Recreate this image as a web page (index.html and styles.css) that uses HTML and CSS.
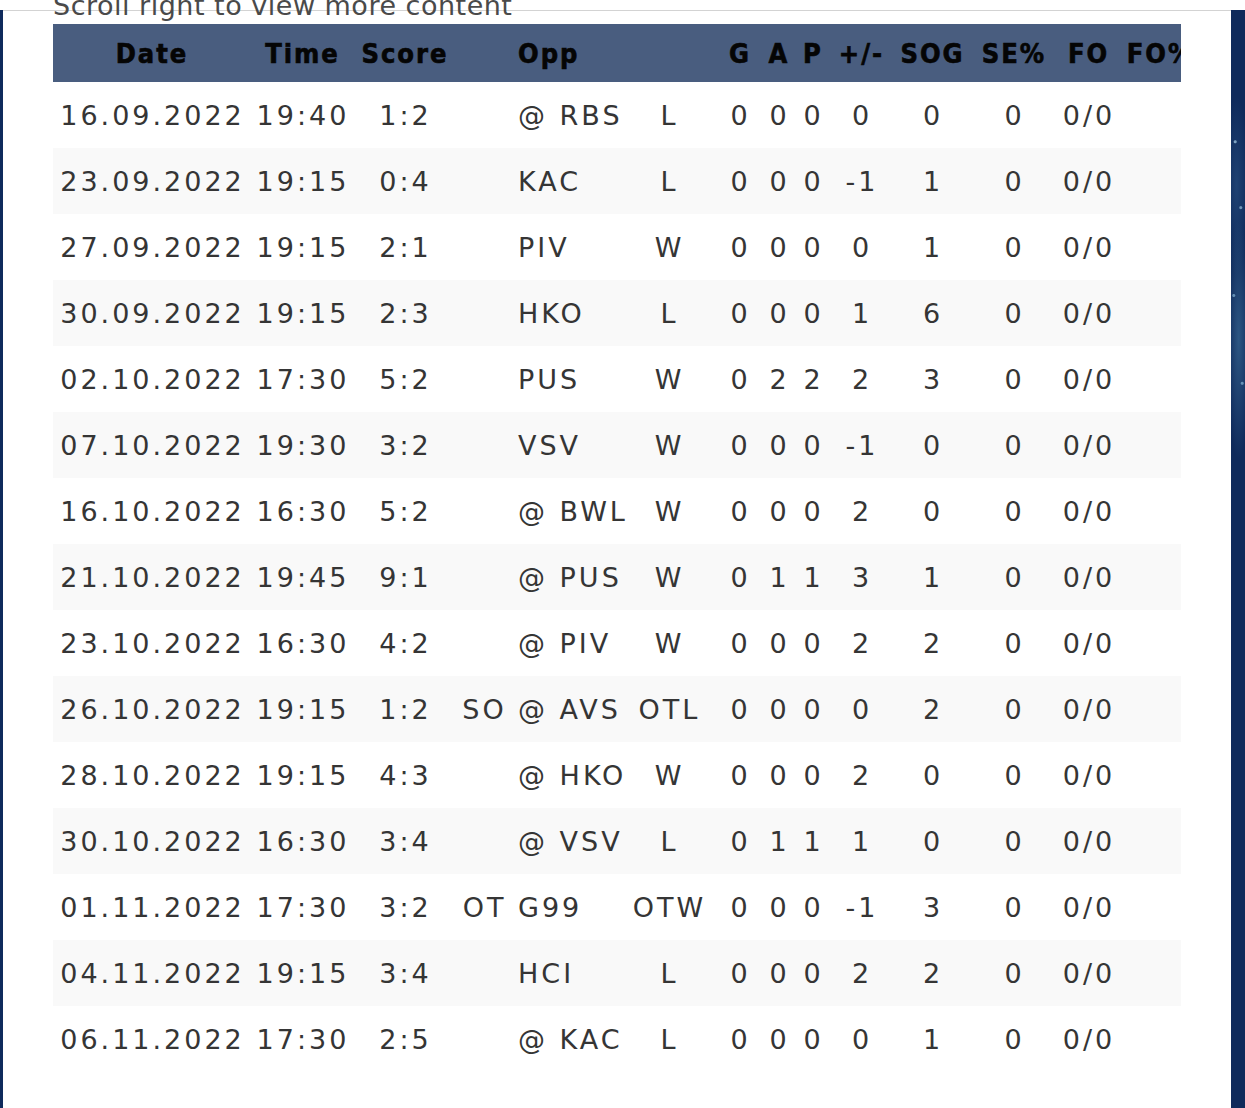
FILE: index.html
```html
<!DOCTYPE html>
<html lang="en">
<head>
<meta charset="utf-8">
<title>Game log</title>
<link rel="stylesheet" href="styles.css">
</head>
<body>
<div class="frame">
  <div class="edge-left"></div>
  <main class="content">
    <div class="hint">Scroll right to view more content</div>
    <div class="table-wrap">
      <table class="games">
        <colgroup>
          <col class="c-date"><col class="c-time"><col class="c-score"><col class="c-extra"><col class="c-opp"><col class="c-res">
          <col class="c-g"><col class="c-a"><col class="c-p"><col class="c-pm"><col class="c-sog"><col class="c-se"><col class="c-fo"><col class="c-fop">
        </colgroup>
        <thead>
          <tr>
            <th>Date</th><th>Time</th><th>Score</th><th></th><th class="opp">Opp</th><th></th>
            <th>G</th><th>A</th><th>P</th><th>+/-</th><th>SOG</th><th>SE%</th><th>FO</th><th>FO%</th>
          </tr>
        </thead>
        <tbody>
          <tr><td>16.09.2022</td><td>19:40</td><td>1:2</td><td></td><td class="opp">@ RBS</td><td>L</td><td>0</td><td>0</td><td>0</td><td>0</td><td>0</td><td>0</td><td>0/0</td><td></td></tr>
          <tr><td>23.09.2022</td><td>19:15</td><td>0:4</td><td></td><td class="opp">KAC</td><td>L</td><td>0</td><td>0</td><td>0</td><td>-1</td><td>1</td><td>0</td><td>0/0</td><td></td></tr>
          <tr><td>27.09.2022</td><td>19:15</td><td>2:1</td><td></td><td class="opp">PIV</td><td>W</td><td>0</td><td>0</td><td>0</td><td>0</td><td>1</td><td>0</td><td>0/0</td><td></td></tr>
          <tr><td>30.09.2022</td><td>19:15</td><td>2:3</td><td></td><td class="opp">HKO</td><td>L</td><td>0</td><td>0</td><td>0</td><td>1</td><td>6</td><td>0</td><td>0/0</td><td></td></tr>
          <tr><td>02.10.2022</td><td>17:30</td><td>5:2</td><td></td><td class="opp">PUS</td><td>W</td><td>0</td><td>2</td><td>2</td><td>2</td><td>3</td><td>0</td><td>0/0</td><td></td></tr>
          <tr><td>07.10.2022</td><td>19:30</td><td>3:2</td><td></td><td class="opp">VSV</td><td>W</td><td>0</td><td>0</td><td>0</td><td>-1</td><td>0</td><td>0</td><td>0/0</td><td></td></tr>
          <tr><td>16.10.2022</td><td>16:30</td><td>5:2</td><td></td><td class="opp">@ BWL</td><td>W</td><td>0</td><td>0</td><td>0</td><td>2</td><td>0</td><td>0</td><td>0/0</td><td></td></tr>
          <tr><td>21.10.2022</td><td>19:45</td><td>9:1</td><td></td><td class="opp">@ PUS</td><td>W</td><td>0</td><td>1</td><td>1</td><td>3</td><td>1</td><td>0</td><td>0/0</td><td></td></tr>
          <tr><td>23.10.2022</td><td>16:30</td><td>4:2</td><td></td><td class="opp">@ PIV</td><td>W</td><td>0</td><td>0</td><td>0</td><td>2</td><td>2</td><td>0</td><td>0/0</td><td></td></tr>
          <tr><td>26.10.2022</td><td>19:15</td><td>1:2</td><td>SO</td><td class="opp">@ AVS</td><td>OTL</td><td>0</td><td>0</td><td>0</td><td>0</td><td>2</td><td>0</td><td>0/0</td><td></td></tr>
          <tr><td>28.10.2022</td><td>19:15</td><td>4:3</td><td></td><td class="opp">@ HKO</td><td>W</td><td>0</td><td>0</td><td>0</td><td>2</td><td>0</td><td>0</td><td>0/0</td><td></td></tr>
          <tr><td>30.10.2022</td><td>16:30</td><td>3:4</td><td></td><td class="opp">@ VSV</td><td>L</td><td>0</td><td>1</td><td>1</td><td>1</td><td>0</td><td>0</td><td>0/0</td><td></td></tr>
          <tr><td>01.11.2022</td><td>17:30</td><td>3:2</td><td>OT</td><td class="opp">G99</td><td>OTW</td><td>0</td><td>0</td><td>0</td><td>-1</td><td>3</td><td>0</td><td>0/0</td><td></td></tr>
          <tr><td>04.11.2022</td><td>19:15</td><td>3:4</td><td></td><td class="opp">HCI</td><td>L</td><td>0</td><td>0</td><td>0</td><td>2</td><td>2</td><td>0</td><td>0/0</td><td></td></tr>
          <tr><td>06.11.2022</td><td>17:30</td><td>2:5</td><td></td><td class="opp">@ KAC</td><td>L</td><td>0</td><td>0</td><td>0</td><td>0</td><td>1</td><td>0</td><td>0/0</td><td></td></tr>
        </tbody>
      </table>
    </div>
  </main>
  <div class="edge-right"></div>
</div>
</body>
</html>
```

FILE: styles.css
```css
html, body {
  margin: 0;
  padding: 0;
  background: #ffffff;
}

body {
  width: 1245px;
  height: 1108px;
  overflow: hidden;
  font-family: "DejaVu Sans", "Liberation Sans", sans-serif;
}

.frame {
  display: flex;
  margin-top: 10px;
  height: 1098px;
}

.edge-left {
  width: 3px;
  flex: none;
  background: #0f2a5c;
}

.content {
  width: 1228px;
  flex: none;
  box-sizing: border-box;
  border-top: 1px solid #d3d3d3;
  padding-left: 50px;
  background: #ffffff;
}

.edge-right {
  flex: 1;
  background:
    radial-gradient(circle at 30% 12%, rgba(170, 210, 235, 0.7) 0 1px, transparent 2px),
    radial-gradient(circle at 70% 18%, rgba(170, 210, 235, 0.6) 0 1px, transparent 2px),
    radial-gradient(circle at 20% 26%, rgba(150, 200, 230, 0.6) 0 1px, transparent 2px),
    radial-gradient(circle at 80% 34%, rgba(150, 200, 230, 0.6) 0 1px, transparent 2px),
    radial-gradient(ellipse 12px 120px at 55% 30%, rgba(80, 140, 180, 0.45), transparent),
    radial-gradient(ellipse 12px 90px at 40% 16%, rgba(60, 110, 160, 0.35), transparent),
    #0f2a5b;
}

.hint {
  margin-top: -23px;
  height: 36px;
  line-height: 36px;
  font-size: 27px;
  color: #4a4a4a;
  letter-spacing: 0.5px;
  white-space: nowrap;
}

.table-wrap {
  width: 1128px;
  overflow: hidden;
}

.games {
  border-collapse: collapse;
  table-layout: fixed;
  width: 1147px;
}

.games th,
.games td {
  padding: 0;
  text-align: center;
  white-space: nowrap;
  overflow: visible;
}

.games thead tr {
  height: 58px;
  background: #495d7f;
}

.games th {
  font-family: "DejaVu Sans Condensed", "Liberation Sans Narrow", "DejaVu Sans", sans-serif;
  font-stretch: condensed;
  font-weight: 700;
  font-size: 27px;
  letter-spacing: 2px;
  text-indent: 2px;
  color: #050505;
  -webkit-text-stroke: 0.6px #050505;
}

.games tbody tr {
  height: 66px;
}

.games tbody tr:nth-child(even) {
  background: #f9f9f9;
}

.games td {
  font-size: 27px;
  letter-spacing: 3px;
  text-indent: 3px;
  color: #353535;
}

.games th.opp,
.games td.opp {
  text-align: left;
  text-indent: 6px;
}

.c-date { width: 196px; }
.c-time { width: 105px; }
.c-score { width: 100px; }
.c-extra { width: 58px; }
.c-opp { width: 106px; }
.c-res { width: 100px; }
.c-g { width: 42px; }
.c-a { width: 36px; }
.c-p { width: 32px; }
.c-pm { width: 65px; }
.c-sog { width: 77px; }
.c-se { width: 86px; }
.c-fo { width: 63px; }
.c-fop { width: 81px; }
```
